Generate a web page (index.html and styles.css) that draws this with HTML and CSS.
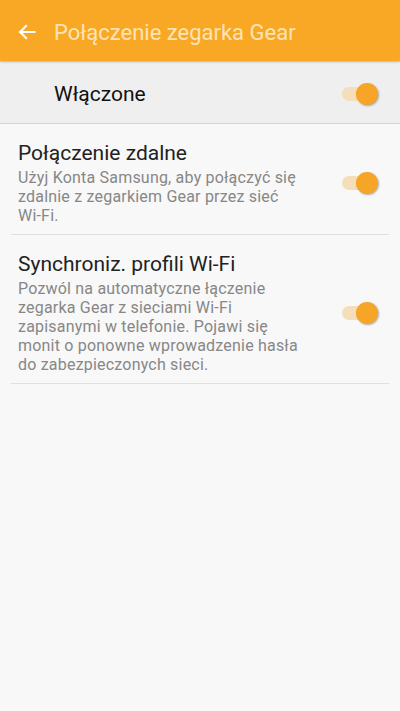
FILE: index.html
```html
<!DOCTYPE html>
<html lang="pl">
<head>
    <meta charset="UTF-8">
    <meta name="viewport" content="width=device-width, initial-scale=1.0">
    <title>Połączenie zegarka Gear</title>
    <link rel="stylesheet" href="styles.css">
</head>
<body>
    <header class="appbar">
        <svg class="back" width="18" height="16" viewBox="0 0 18 16">
            <path d="M17.5 8H2M8.8 1.2L2 8l6.8 6.8" fill="none" stroke="#fff" stroke-width="2"/>
        </svg>
        <h1>Połączenie zegarka Gear</h1>
    </header>
    <div class="master">
        <span>Włączone</span>
        <div class="toggle on"><span class="thumb"></span></div>
    </div>
    <section class="list">
        <div class="row">
            <div class="text">
                <h2>Połączenie zdalne</h2>
                <p>Użyj Konta Samsung, aby połączyć się zdalnie z zegarkiem Gear przez sieć Wi-&#8288;Fi.</p>
            </div>
            <div class="toggle on"><span class="thumb"></span></div>
        </div>
        <div class="row">
            <div class="text">
                <h2>Synchroniz. profili Wi-Fi</h2>
                <p>Pozwól na automatyczne łączenie zegarka Gear z sieciami Wi-&#8288;Fi zapisanymi w telefonie. Pojawi się monit o ponowne wprowadzenie hasła do zabezpieczonych sieci.</p>
            </div>
            <div class="toggle on"><span class="thumb"></span></div>
        </div>
    </section>
</body>
</html>
```
FILE: styles.css
```css
body{
    margin: 0;
    font-family: Roboto, "Noto Sans", sans-serif;
    background-color: #f8f8f8;
    color: #222;
}
.appbar{
    height: 61px;
    background-color: #f9a826;
    display: flex;
    align-items: center;
    padding: 3px 0 0 18px;
    box-sizing: border-box;
    box-shadow: 0 1px 2px rgba(0,0,0,.25);
    position: relative;
}
.appbar h1{
    margin: 0 0 0 18px;
    font-size: 22px;
    font-weight: normal;
    color: #ffe3b5;
}
.master{
    height: 63px;
    background-color: #efefef;
    border-bottom: 1px solid #d4d4d4;
    display: flex;
    align-items: center;
    justify-content: space-between;
    padding: 3px 22px 0 54px;
    box-sizing: border-box;
    font-size: 21px;
    color: #111;
}
.list{
    margin: 0 11px;
}
.row{
    display: flex;
    align-items: center;
    justify-content: space-between;
    padding: 16px 11px 9px 7px;
    border-bottom: 1px solid #e0e0e0;
}
.row h2{
    margin: 0 0 2px;
    font-size: 21px;
    line-height: 26px;
    font-weight: normal;
    color: #222;
}
.row p{
    margin: 0;
    width: 290px;
    font-size: 16px;
    letter-spacing: 0.2px;
    line-height: 19px;
    color: #878787;
}
.toggle{
    width: 36px;
    height: 22px;
    position: relative;
    flex-shrink: 0;
}
.toggle::before{
    content: "";
    position: absolute;
    left: 0;
    top: 4px;
    width: 28px;
    height: 14px;
    border-radius: 7px;
    background-color: #f4dfba;
}
.toggle .thumb{
    position: absolute;
    right: 0;
    top: 0;
    width: 22px;
    height: 22px;
    border-radius: 50%;
    background-color: #f6a526;
    box-shadow: 1px 1px 2px rgba(0,0,0,.3);
}
```
